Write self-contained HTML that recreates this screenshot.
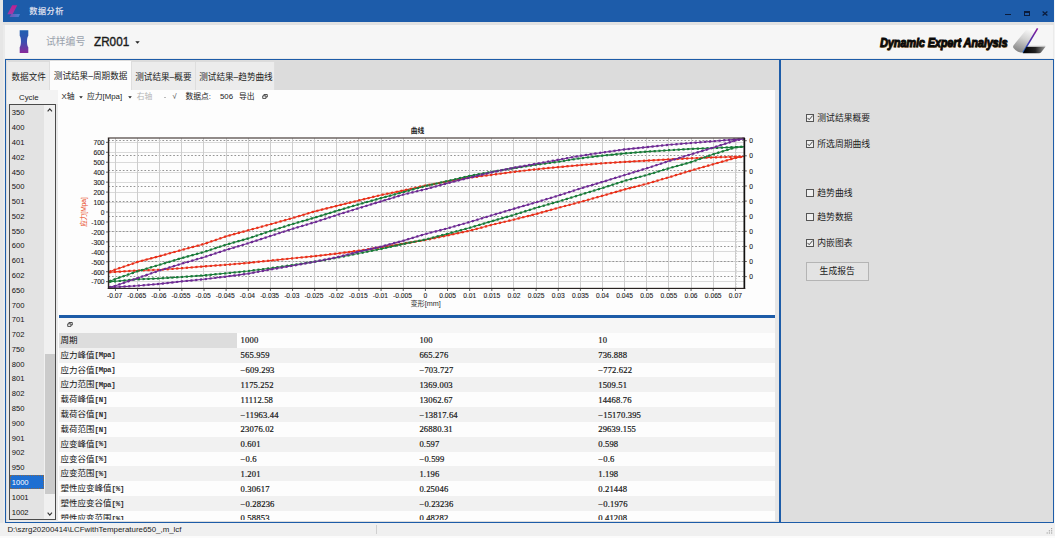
<!DOCTYPE html>
<html lang="zh"><head><meta charset="utf-8"><title>数据分析</title>
<style>
*{box-sizing:border-box;margin:0;padding:0}
html,body{width:1055px;height:538px;overflow:hidden}
body{position:relative;background:#ebebeb;font-family:"Liberation Sans","Noto Sans CJK SC",sans-serif;color:#222;font-size:9px}
.abs{position:absolute}
.t{position:absolute;white-space:nowrap;line-height:1}
#titlebar{left:3px;top:0;width:1051px;height:21.7px;background:#1d5caa}
#hdr{left:4.5px;top:24.8px;width:1048.5px;height:33.2px;background:#f6f6f6}
#lp{left:4.7px;top:59.1px;width:776px;height:464.1px;border:1.9px solid #1d5ca8;border-top-width:1.8px;border-bottom-width:1.7px;border-right-width:2px;background:#dcdcdc}
#rp{left:779px;top:59.1px;width:274.8px;height:464.0px;border:2px solid #1d5ca8;border-top-width:1.8px;border-right-width:1.6px;border-bottom-width:1.7px;background:#dedede}
#status{left:0;top:523.1px;width:1055px;height:12.7px;background:#f0f0f0}
#bottomline{left:0;top:535.7px;width:1055px;height:2.3px;background:#fbfbfb}
.tab{position:absolute;top:62.3px;height:27.4px;background:#ececec;border-right:1px solid #dedede}
.tab.sel{background:#fcfcfc;top:61px;height:29px}
.tabt{position:absolute;white-space:nowrap;line-height:1;font-size:8.6px;color:#222;top:72.8px}
.cb{position:absolute;left:805.7px;width:8.4px;height:8.2px;border:0.9px solid #555;background:#efefef}
.cbt{position:absolute;left:817.3px;white-space:nowrap;line-height:1;font-size:8.8px;color:#222}
.li{position:absolute;left:11.7px;white-space:nowrap;line-height:1;font-size:7.6px;font-family:"Liberation Sans",sans-serif;color:#111}
.row{position:absolute;left:58.6px;width:716.7px;height:14.8px}
.rk{position:absolute;left:60.5px;white-space:nowrap;line-height:1;font-size:8.5px;font-family:"Liberation Serif","Noto Sans CJK SC",serif;color:#111;font-weight:400}
.rv{position:absolute;white-space:nowrap;line-height:1;font-size:8.6px;font-family:"Liberation Serif","Noto Serif CJK SC",serif;color:#151515;-webkit-text-stroke:0.2px #151515;letter-spacing:0.15px}
</style></head>
<body>
<div class="abs" id="titlebar"></div>
<div class="abs" style="left:0;top:0;width:3px;height:538px;background:#e6e6e6"></div>
<div class="abs" style="left:1054px;top:0;width:1px;height:538px;background:#f4f4f4"></div>
<div class="abs" style="left:3px;top:21.7px;width:1051px;height:3.3px;background:#e2e2e2"></div>
<div class="abs" id="hdr"></div>
<div class="abs" id="lp"></div>
<div class="abs" id="rp"></div>
<div class="abs" id="status"></div>
<div class="abs" id="bottomline"></div>
<svg class="abs" style="left:6px;top:4px" width="14" height="14" viewBox="0 0 14 14">
<defs><linearGradient id="lg1" x1="0" y1="0" x2="0" y2="1"><stop offset="0" stop-color="#c0208f"/><stop offset="1" stop-color="#a03aa8"/></linearGradient>
<linearGradient id="lg2" x1="0" y1="0" x2="1" y2="0"><stop offset="0" stop-color="#7a4fb5"/><stop offset="1" stop-color="#3f86d6"/></linearGradient></defs>
<path d="M6.2 1.2 L11.2 1.2 L6.6 10.2 L1.4 10.2 Z" fill="url(#lg1)"/>
<path d="M5.4 10 L14 10 L12.6 13 L3.6 13 Z" fill="url(#lg2)"/>
</svg>
<div class="t" style="left:29.2px;top:8.2px;font-size:8.2px;letter-spacing:0.5px;color:#d0d7e9;font-weight:700">数据分析</div>
<div class="abs" style="left:1005.4px;top:13.9px;width:5.6px;height:1.6px;background:#0b1c3c"></div>
<div class="abs" style="left:1023.6px;top:10.8px;width:6.3px;height:5.4px;border:1.2px solid #0b1c3c;border-top-width:2.2px"></div>
<svg class="abs" style="left:1042px;top:11.2px" width="6" height="5" viewBox="0 0 6 5"><path d="M0.6 0.5 L5.4 4.5 M5.4 0.5 L0.6 4.5" stroke="#0b1c3c" stroke-width="1.3" fill="none"/></svg>
<svg class="abs" style="left:19px;top:30px" width="10" height="24" viewBox="0 0 10 24">
<defs><linearGradient id="sg" x1="0" y1="0" x2="0" y2="1"><stop offset="0" stop-color="#1f5fb0"/><stop offset="0.5" stop-color="#3a4fb0"/><stop offset="1" stop-color="#8a2a9a"/></linearGradient></defs>
<path d="M0.7 0.3 H9.3 V5.8 C7.6 7.5 7.6 15.5 9.3 17.2 V23 H0.7 V17.2 C2.4 15.5 2.4 7.5 0.7 5.8 Z" fill="url(#sg)"/></svg>
<div class="t" style="left:46px;top:36.6px;font-size:9.8px;color:#9aa2ad">试样编号</div>
<div class="t" style="left:94px;top:34.6px;font-size:13.4px;color:#1a1a1a;transform-origin:0 0;transform:scaleX(0.875);-webkit-text-stroke:0.4px #1a1a1a">ZR001</div>
<svg class="abs" style="left:135px;top:41px" width="5" height="3" viewBox="0 0 5 3"><path d="M0.3 0.2 H4.7 L2.5 2.8 Z" fill="#222"/></svg>
<div class="t" id="dea" style="left:879.6px;top:35.6px;font-size:13.6px;font-weight:700;font-style:italic;color:#0a0a0a;transform-origin:0 0;transform:scaleX(0.81);-webkit-text-stroke:0.95px #0a0a0a;text-shadow:0.8px 0.8px 0 #d9a868;letter-spacing:-0.2px">Dynamic Expert Analysis</div>
<svg class="abs" style="left:1011px;top:27px" width="38" height="29" viewBox="0 0 38 29">
<defs><linearGradient id="sv" x1="0.7" y1="0" x2="0.3" y2="1"><stop offset="0" stop-color="#fbfbfb"/><stop offset="0.45" stop-color="#d2d2d2"/><stop offset="1" stop-color="#858585"/></linearGradient>
<linearGradient id="pl" x1="0" y1="0" x2="0" y2="1"><stop offset="0" stop-color="#8a1a9a"/><stop offset="0.5" stop-color="#4a2aa8"/><stop offset="1" stop-color="#1f6fd0"/></linearGradient>
<linearGradient id="bk" x1="0" y1="0" x2="1" y2="0"><stop offset="0" stop-color="#000"/><stop offset="0.55" stop-color="#222"/><stop offset="1" stop-color="#9a9a9a"/></linearGradient></defs>
<path d="M14.5 3.5 Q16 1.8 18.5 1.8 L26.5 1.8 L12.5 25.5 L9.5 25.5 Q5 24.5 2.5 21 Q1.6 19.6 2.6 18.2 Z" fill="url(#sv)"/>
<path d="M26.6 1.4 L12 25.6" stroke="url(#pl)" stroke-width="1.6" fill="none"/>
<path d="M15.5 19.8 L34.5 19.8 L30 25.6 Q29.3 26.3 28 26.3 L11.8 26.3 Z" fill="url(#bk)"/>
<path d="M17.5 19.3 L34.3 19.3" stroke="#bdbdbd" stroke-width="1"/>
</svg>
<div class="abs" style="left:6.7px;top:60.9px;width:1.7px;height:29px;background:#e8e8e8"></div>
<div class="tab" style="left:8px;width:41.7px"></div>
<div class="tab sel" style="left:49.7px;width:82.6px"></div>
<div class="tab" style="left:132.3px;width:63.4px"></div>
<div class="tab" style="left:195.7px;width:79.5px"></div>
<div class="tabt" style="left:11.5px">数据文件</div>
<div class="tabt" style="left:53.8px;top:71.7px">测试结果–周期数据</div>
<div class="tabt" style="left:135.2px">测试结果–概要</div>
<div class="tabt" style="left:199.2px">测试结果–趋势曲线</div>
<div class="abs" style="left:6.6px;top:89.7px;width:768.7px;height:431.8px;background:#fdfdfd"></div>
<div class="abs" style="left:6.6px;top:104px;width:51.8px;height:417.5px;background:#e9e9e9"></div>
<div class="abs" style="left:775.3px;top:89.7px;width:3.5px;height:431.8px;background:#e6e6e6"></div>
<div class="abs" style="left:6.7px;top:89.7px;width:51.5px;height:14.3px;background:#f3f3f3"></div>
<div class="t" style="left:19px;top:93.5px;font-size:7.8px;color:#222">Cycle</div>
<div class="abs" style="left:9.2px;top:104px;width:47px;height:415.6px;border:1px solid #4a4a4a;background:#f0f0f0"></div>
<div class="abs" style="left:10.2px;top:105px;width:34px;height:413.6px;background:#e3e3e3"></div>
<div class="li" style="top:109.4px">350</div>
<div class="li" style="top:124.2px">400</div>
<div class="li" style="top:139.0px">401</div>
<div class="li" style="top:153.7px">402</div>
<div class="li" style="top:168.5px">450</div>
<div class="li" style="top:183.3px">500</div>
<div class="li" style="top:198.1px">501</div>
<div class="li" style="top:212.9px">502</div>
<div class="li" style="top:227.6px">550</div>
<div class="li" style="top:242.4px">600</div>
<div class="li" style="top:257.2px">601</div>
<div class="li" style="top:272.0px">602</div>
<div class="li" style="top:286.8px">650</div>
<div class="li" style="top:301.5px">700</div>
<div class="li" style="top:316.3px">701</div>
<div class="li" style="top:331.1px">702</div>
<div class="li" style="top:345.9px">750</div>
<div class="li" style="top:360.7px">800</div>
<div class="li" style="top:375.4px">801</div>
<div class="li" style="top:390.2px">802</div>
<div class="li" style="top:405.0px">850</div>
<div class="li" style="top:419.8px">900</div>
<div class="li" style="top:434.6px">901</div>
<div class="li" style="top:449.3px">902</div>
<div class="li" style="top:464.1px">950</div>
<div class="abs" style="left:10.2px;top:474.5px;width:34.3px;height:14.6px;background:#1e6fd2;border:1px dotted #8a6a4a"></div>
<div class="li" style="top:478.9px;color:#fff">1000</div>
<div class="li" style="top:493.7px">1001</div>
<div class="li" style="top:508.5px">1002</div>
<div class="abs" style="left:45px;top:354px;width:9.6px;height:139.7px;background:#cbcbcb"></div>
<svg class="abs" style="left:47px;top:107.6px" width="5.6" height="4" viewBox="0 0 7 5"><path d="M0.8 4.2 L3.5 1.2 L6.2 4.2" stroke="#333" stroke-width="1.4" fill="none"/></svg>
<svg class="abs" style="left:47.2px;top:512.4px" width="5.6" height="4" viewBox="0 0 7 5"><path d="M0.8 0.8 L3.5 3.8 L6.2 0.8" stroke="#333" stroke-width="1.4" fill="none"/></svg>
<div class="t" style="left:61.5px;top:93.3px;font-size:7.8px;color:#222">X轴</div>
<div class="t" style="left:87px;top:93.3px;font-size:7.8px;color:#222">应力[Mpa]</div>
<div class="t" style="left:136.8px;top:93.3px;font-size:7.8px;color:#b4b4b4">右轴</div>
<div class="t" style="left:185.4px;top:93.3px;font-size:7.8px;color:#222">数据点:</div>
<div class="t" style="left:220px;top:93.3px;font-size:7.8px;color:#222">506</div>
<div class="t" style="left:239px;top:93.3px;font-size:7.8px;color:#222">导出</div>
<svg class="abs" style="left:78.6px;top:96px" width="4" height="3" viewBox="0 0 4 3"><path d="M0.2 0.3 H3.8 L2 2.6 Z" fill="#222"/></svg>
<svg class="abs" style="left:127.6px;top:96px" width="4" height="3" viewBox="0 0 4 3"><path d="M0.2 0.3 H3.8 L2 2.6 Z" fill="#222"/></svg>
<div class="abs" style="left:164px;top:97px;width:2.4px;height:1px;background:#bbb"></div>
<div class="t" style="left:172.6px;top:92.6px;font-size:7.4px;color:#333">√</div>
<svg class="abs" style="left:261.5px;top:93.6px" width="6" height="5.1" viewBox="0 0 7 6"><path d="M2.2 0.6 H6.2 V3.6 H2.2 Z" fill="none" stroke="#333" stroke-width="1"/><path d="M0.8 2.2 H4.6 V5.2 H0.8 Z" fill="#fdfdfd" stroke="#333" stroke-width="1"/></svg>
<svg class="abs" style="left:0;top:0" width="1055" height="538" viewBox="0 0 1055 538" font-family="Liberation Sans, Noto Sans CJK SC, sans-serif">
<line x1="108.4" x2="744.4" y1="281.50" y2="281.50" stroke="#dadada" stroke-width="1"/>
<line x1="108.4" x2="744.4" y1="271.50" y2="271.50" stroke="#dadada" stroke-width="1"/>
<line x1="108.4" x2="744.4" y1="261.50" y2="261.50" stroke="#dadada" stroke-width="1"/>
<line x1="108.4" x2="744.4" y1="251.50" y2="251.50" stroke="#dadada" stroke-width="1"/>
<line x1="108.4" x2="744.4" y1="241.50" y2="241.50" stroke="#dadada" stroke-width="1"/>
<line x1="108.4" x2="744.4" y1="231.50" y2="231.50" stroke="#dadada" stroke-width="1"/>
<line x1="108.4" x2="744.4" y1="221.50" y2="221.50" stroke="#dadada" stroke-width="1"/>
<line x1="108.4" x2="744.4" y1="212.50" y2="212.50" stroke="#dadada" stroke-width="1"/>
<line x1="108.4" x2="744.4" y1="202.50" y2="202.50" stroke="#dadada" stroke-width="1"/>
<line x1="108.4" x2="744.4" y1="192.50" y2="192.50" stroke="#dadada" stroke-width="1"/>
<line x1="108.4" x2="744.4" y1="182.50" y2="182.50" stroke="#dadada" stroke-width="1"/>
<line x1="108.4" x2="744.4" y1="172.50" y2="172.50" stroke="#dadada" stroke-width="1"/>
<line x1="108.4" x2="744.4" y1="162.50" y2="162.50" stroke="#dadada" stroke-width="1"/>
<line x1="108.4" x2="744.4" y1="152.50" y2="152.50" stroke="#dadada" stroke-width="1"/>
<line x1="108.4" x2="744.4" y1="142.50" y2="142.50" stroke="#dadada" stroke-width="1"/>
<line x1="108.4" x2="744.4" y1="140.50" y2="140.50" stroke="#959595" stroke-width="1" stroke-dasharray="1.7 1.9"/>
<line x1="108.4" x2="744.4" y1="155.50" y2="155.50" stroke="#959595" stroke-width="1" stroke-dasharray="1.7 1.9"/>
<line x1="108.4" x2="744.4" y1="170.50" y2="170.50" stroke="#959595" stroke-width="1" stroke-dasharray="1.7 1.9"/>
<line x1="108.4" x2="744.4" y1="186.50" y2="186.50" stroke="#959595" stroke-width="1" stroke-dasharray="1.7 1.9"/>
<line x1="108.4" x2="744.4" y1="201.50" y2="201.50" stroke="#959595" stroke-width="1" stroke-dasharray="1.7 1.9"/>
<line x1="108.4" x2="744.4" y1="216.50" y2="216.50" stroke="#959595" stroke-width="1" stroke-dasharray="1.7 1.9"/>
<line x1="108.4" x2="744.4" y1="231.50" y2="231.50" stroke="#959595" stroke-width="1" stroke-dasharray="1.7 1.9"/>
<line x1="108.4" x2="744.4" y1="246.50" y2="246.50" stroke="#959595" stroke-width="1" stroke-dasharray="1.7 1.9"/>
<line x1="108.4" x2="744.4" y1="261.50" y2="261.50" stroke="#959595" stroke-width="1" stroke-dasharray="1.7 1.9"/>
<line x1="108.4" x2="744.4" y1="276.50" y2="276.50" stroke="#959595" stroke-width="1" stroke-dasharray="1.7 1.9"/>
<line x1="115.50" x2="115.50" y1="138.0" y2="288.4" stroke="#cdcdcd" stroke-width="1"/>
<line x1="137.50" x2="137.50" y1="138.0" y2="288.4" stroke="#cdcdcd" stroke-width="1"/>
<line x1="159.50" x2="159.50" y1="138.0" y2="288.4" stroke="#cdcdcd" stroke-width="1"/>
<line x1="181.50" x2="181.50" y1="138.0" y2="288.4" stroke="#cdcdcd" stroke-width="1"/>
<line x1="203.50" x2="203.50" y1="138.0" y2="288.4" stroke="#cdcdcd" stroke-width="1"/>
<line x1="226.50" x2="226.50" y1="138.0" y2="288.4" stroke="#cdcdcd" stroke-width="1"/>
<line x1="248.50" x2="248.50" y1="138.0" y2="288.4" stroke="#cdcdcd" stroke-width="1"/>
<line x1="270.50" x2="270.50" y1="138.0" y2="288.4" stroke="#cdcdcd" stroke-width="1"/>
<line x1="292.50" x2="292.50" y1="138.0" y2="288.4" stroke="#cdcdcd" stroke-width="1"/>
<line x1="314.50" x2="314.50" y1="138.0" y2="288.4" stroke="#cdcdcd" stroke-width="1"/>
<line x1="336.50" x2="336.50" y1="138.0" y2="288.4" stroke="#cdcdcd" stroke-width="1"/>
<line x1="358.50" x2="358.50" y1="138.0" y2="288.4" stroke="#cdcdcd" stroke-width="1"/>
<line x1="381.50" x2="381.50" y1="138.0" y2="288.4" stroke="#cdcdcd" stroke-width="1"/>
<line x1="403.50" x2="403.50" y1="138.0" y2="288.4" stroke="#cdcdcd" stroke-width="1"/>
<line x1="425.50" x2="425.50" y1="138.0" y2="288.4" stroke="#cdcdcd" stroke-width="1"/>
<line x1="447.50" x2="447.50" y1="138.0" y2="288.4" stroke="#cdcdcd" stroke-width="1"/>
<line x1="469.50" x2="469.50" y1="138.0" y2="288.4" stroke="#cdcdcd" stroke-width="1"/>
<line x1="491.50" x2="491.50" y1="138.0" y2="288.4" stroke="#cdcdcd" stroke-width="1"/>
<line x1="513.50" x2="513.50" y1="138.0" y2="288.4" stroke="#cdcdcd" stroke-width="1"/>
<line x1="536.50" x2="536.50" y1="138.0" y2="288.4" stroke="#cdcdcd" stroke-width="1"/>
<line x1="558.50" x2="558.50" y1="138.0" y2="288.4" stroke="#cdcdcd" stroke-width="1"/>
<line x1="580.50" x2="580.50" y1="138.0" y2="288.4" stroke="#cdcdcd" stroke-width="1"/>
<line x1="602.50" x2="602.50" y1="138.0" y2="288.4" stroke="#cdcdcd" stroke-width="1"/>
<line x1="624.50" x2="624.50" y1="138.0" y2="288.4" stroke="#cdcdcd" stroke-width="1"/>
<line x1="646.50" x2="646.50" y1="138.0" y2="288.4" stroke="#cdcdcd" stroke-width="1"/>
<line x1="668.50" x2="668.50" y1="138.0" y2="288.4" stroke="#cdcdcd" stroke-width="1"/>
<line x1="691.50" x2="691.50" y1="138.0" y2="288.4" stroke="#cdcdcd" stroke-width="1"/>
<line x1="713.50" x2="713.50" y1="138.0" y2="288.4" stroke="#cdcdcd" stroke-width="1"/>
<line x1="735.50" x2="735.50" y1="138.0" y2="288.4" stroke="#cdcdcd" stroke-width="1"/>
<line x1="736.4" x2="736.4" y1="138.0" y2="288.4" stroke="#bdbdbd" stroke-width="0.8" stroke-dasharray="1.1 1.7"/>
<path d="M109.1 271.7 L115.5 269.5 L137.6 261.9 L159.6 256.1 L181.6 250.0 L203.9 244.0 L225.9 236.4 L248.3 230.3 L270.4 224.3 L292.7 218.0 L314.7 211.4 L336.7 205.9 L359.1 200.4 L381.0 195.0 L403.6 190.4 L425.4 185.5 L447.7 181.5 L469.7 177.6 L492.0 174.8 L514.3 171.8 L536.4 169.2 L558.6 167.1 L580.3 165.1 L602.5 163.3 L624.8 161.9 L646.9 160.6 L669.1 159.4 L691.1 158.3 L713.2 157.4 L735.5 156.7 L743.8 156.5" fill="none" stroke="#e8301a" stroke-width="1.1" stroke-linejoin="round"/>
<path d="M109.1 271.7 L115.5 269.5 L137.6 261.9 L159.6 256.1 L181.6 250.0 L203.9 244.0 L225.9 236.4 L248.3 230.3 L270.4 224.3 L292.7 218.0 L314.7 211.4 L336.7 205.9 L359.1 200.4 L381.0 195.0 L403.6 190.4 L425.4 185.5 L447.7 181.5 L469.7 177.6 L492.0 174.8 L514.3 171.8 L536.4 169.2 L558.6 167.1 L580.3 165.1 L602.5 163.3 L624.8 161.9 L646.9 160.6 L669.1 159.4 L691.1 158.3 L713.2 157.4 L735.5 156.7 L743.8 156.5" fill="none" stroke="#e8301a" stroke-width="2.2" stroke-dasharray="2.2 2.6" stroke-linejoin="round"/>
<path d="M109.1 272.3 L115.5 271.9 L137.6 270.5 L159.6 269.8 L181.6 268.2 L203.9 266.4 L225.9 264.8 L248.3 262.9 L270.4 260.6 L292.7 258.3 L314.7 256.1 L336.7 253.6 L359.1 250.6 L381.0 247.3 L403.6 243.6 L425.4 240.0 L447.7 235.4 L469.7 230.7 L492.0 224.8 L514.3 219.5 L536.4 213.9 L558.6 207.7 L580.3 202.0 L602.5 195.7 L624.8 189.4 L646.9 183.7 L669.1 177.2 L691.1 170.5 L713.2 164.2 L735.5 157.9 L743.8 156.5" fill="none" stroke="#e8301a" stroke-width="1.1" stroke-linejoin="round"/>
<path d="M109.1 272.3 L115.5 271.9 L137.6 270.5 L159.6 269.8 L181.6 268.2 L203.9 266.4 L225.9 264.8 L248.3 262.9 L270.4 260.6 L292.7 258.3 L314.7 256.1 L336.7 253.6 L359.1 250.6 L381.0 247.3 L403.6 243.6 L425.4 240.0 L447.7 235.4 L469.7 230.7 L492.0 224.8 L514.3 219.5 L536.4 213.9 L558.6 207.7 L580.3 202.0 L602.5 195.7 L624.8 189.4 L646.9 183.7 L669.1 177.2 L691.1 170.5 L713.2 164.2 L735.5 157.9 L743.8 156.5" fill="none" stroke="#e8301a" stroke-width="2.2" stroke-dasharray="2.2 2.6" stroke-linejoin="round"/>
<path d="M109.1 281.4 L115.5 278.9 L137.6 271.3 L159.6 264.8 L181.6 258.1 L203.9 252.0 L225.9 244.7 L248.3 238.4 L270.4 231.0 L292.7 224.0 L314.7 217.6 L336.7 210.9 L359.1 204.2 L381.0 198.1 L403.6 192.0 L425.4 186.0 L447.7 181.0 L469.7 175.9 L492.0 171.8 L514.3 168.1 L536.4 164.7 L558.6 161.7 L580.3 158.3 L602.5 155.6 L624.8 153.4 L646.9 151.6 L669.1 150.2 L691.1 148.9 L713.2 148.0 L735.5 147.1 L743.8 146.7" fill="none" stroke="#187a38" stroke-width="1.1" stroke-linejoin="round"/>
<path d="M109.1 281.4 L115.5 278.9 L137.6 271.3 L159.6 264.8 L181.6 258.1 L203.9 252.0 L225.9 244.7 L248.3 238.4 L270.4 231.0 L292.7 224.0 L314.7 217.6 L336.7 210.9 L359.1 204.2 L381.0 198.1 L403.6 192.0 L425.4 186.0 L447.7 181.0 L469.7 175.9 L492.0 171.8 L514.3 168.1 L536.4 164.7 L558.6 161.7 L580.3 158.3 L602.5 155.6 L624.8 153.4 L646.9 151.6 L669.1 150.2 L691.1 148.9 L713.2 148.0 L735.5 147.1 L743.8 146.7" fill="none" stroke="#187a38" stroke-width="2.2" stroke-dasharray="2.2 2.6" stroke-linejoin="round"/>
<path d="M109.1 281.9 L115.5 281.3 L137.6 279.3 L159.6 278.4 L181.6 277.0 L203.9 275.4 L225.9 273.3 L248.3 271.0 L270.4 268.2 L292.7 265.0 L314.7 261.7 L336.7 257.8 L359.1 253.3 L381.0 248.9 L403.6 243.9 L425.4 239.5 L447.7 233.7 L469.7 227.8 L492.0 221.1 L514.3 214.8 L536.4 207.7 L558.6 201.5 L580.3 194.8 L602.5 188.0 L624.8 180.8 L646.9 175.0 L669.1 168.2 L691.1 162.1 L713.2 154.3 L735.5 147.4 L743.8 146.7" fill="none" stroke="#187a38" stroke-width="1.1" stroke-linejoin="round"/>
<path d="M109.1 281.9 L115.5 281.3 L137.6 279.3 L159.6 278.4 L181.6 277.0 L203.9 275.4 L225.9 273.3 L248.3 271.0 L270.4 268.2 L292.7 265.0 L314.7 261.7 L336.7 257.8 L359.1 253.3 L381.0 248.9 L403.6 243.9 L425.4 239.5 L447.7 233.7 L469.7 227.8 L492.0 221.1 L514.3 214.8 L536.4 207.7 L558.6 201.5 L580.3 194.8 L602.5 188.0 L624.8 180.8 L646.9 175.0 L669.1 168.2 L691.1 162.1 L713.2 154.3 L735.5 147.4 L743.8 146.7" fill="none" stroke="#187a38" stroke-width="2.2" stroke-dasharray="2.2 2.6" stroke-linejoin="round"/>
<path d="M109.1 287.2 L115.5 285.7 L137.6 278.1 L159.6 270.5 L181.6 263.7 L203.9 257.2 L225.9 250.0 L248.3 243.2 L270.4 236.0 L292.7 228.8 L314.7 222.2 L336.7 215.1 L359.1 208.1 L381.0 201.4 L403.6 194.5 L425.4 189.3 L447.7 183.1 L469.7 177.6 L492.0 172.3 L514.3 167.6 L536.4 163.7 L558.6 159.7 L580.3 155.8 L602.5 152.5 L624.8 149.4 L646.9 147.1 L669.1 144.8 L691.1 143.0 L713.2 141.2 L735.5 139.4 L743.8 138.6" fill="none" stroke="#6d2a93" stroke-width="1.1" stroke-linejoin="round"/>
<path d="M109.1 287.2 L115.5 285.7 L137.6 278.1 L159.6 270.5 L181.6 263.7 L203.9 257.2 L225.9 250.0 L248.3 243.2 L270.4 236.0 L292.7 228.8 L314.7 222.2 L336.7 215.1 L359.1 208.1 L381.0 201.4 L403.6 194.5 L425.4 189.3 L447.7 183.1 L469.7 177.6 L492.0 172.3 L514.3 167.6 L536.4 163.7 L558.6 159.7 L580.3 155.8 L602.5 152.5 L624.8 149.4 L646.9 147.1 L669.1 144.8 L691.1 143.0 L713.2 141.2 L735.5 139.4 L743.8 138.6" fill="none" stroke="#6d2a93" stroke-width="2.2" stroke-dasharray="2.2 2.6" stroke-linejoin="round"/>
<path d="M109.1 287.5 L115.5 287.1 L137.6 285.7 L159.6 283.9 L181.6 281.4 L203.9 279.2 L225.9 276.6 L248.3 273.6 L270.4 269.5 L292.7 265.7 L314.7 261.7 L336.7 257.3 L359.1 251.6 L381.0 246.6 L403.6 240.6 L425.4 234.0 L447.7 228.3 L469.7 222.0 L492.0 215.3 L514.3 208.6 L536.4 202.2 L558.6 195.5 L580.3 188.5 L602.5 181.9 L624.8 175.0 L646.9 168.2 L669.1 161.0 L691.1 154.3 L713.2 147.6 L735.5 140.4 L743.8 138.6" fill="none" stroke="#6d2a93" stroke-width="1.1" stroke-linejoin="round"/>
<path d="M109.1 287.5 L115.5 287.1 L137.6 285.7 L159.6 283.9 L181.6 281.4 L203.9 279.2 L225.9 276.6 L248.3 273.6 L270.4 269.5 L292.7 265.7 L314.7 261.7 L336.7 257.3 L359.1 251.6 L381.0 246.6 L403.6 240.6 L425.4 234.0 L447.7 228.3 L469.7 222.0 L492.0 215.3 L514.3 208.6 L536.4 202.2 L558.6 195.5 L580.3 188.5 L602.5 181.9 L624.8 175.0 L646.9 168.2 L669.1 161.0 L691.1 154.3 L713.2 147.6 L735.5 140.4 L743.8 138.6" fill="none" stroke="#6d2a93" stroke-width="2.2" stroke-dasharray="2.2 2.6" stroke-linejoin="round"/>
<rect x="108.4" y="138.0" width="636.0" height="150.4" fill="none" stroke="#4a403c" stroke-width="1.2"/>
<line x1="744.4" x2="744.4" y1="138.0" y2="289.0" stroke="#111" stroke-width="1.6"/>
<line x1="107.8" x2="745.2" y1="288.5" y2="288.5" stroke="#2a2422" stroke-width="1.15"/>
<line x1="108.7" x2="108.7" y1="138.0" y2="289.0" stroke="#2a2422" stroke-width="1.2"/>
<line x1="106.0" x2="108.4" y1="281.65" y2="281.65" stroke="#333" stroke-width="0.8"/>
<text x="104.6" y="284.45" font-size="6.7" font-weight="400" fill="#1c1c1c" stroke="#1c1c1c" stroke-width="0.1" text-anchor="end">-700</text>
<line x1="106.0" x2="108.4" y1="271.70" y2="271.70" stroke="#333" stroke-width="0.8"/>
<text x="104.6" y="274.50" font-size="6.7" font-weight="400" fill="#1c1c1c" stroke="#1c1c1c" stroke-width="0.1" text-anchor="end">-600</text>
<line x1="106.0" x2="108.4" y1="261.75" y2="261.75" stroke="#333" stroke-width="0.8"/>
<text x="104.6" y="264.55" font-size="6.7" font-weight="400" fill="#1c1c1c" stroke="#1c1c1c" stroke-width="0.1" text-anchor="end">-500</text>
<line x1="106.0" x2="108.4" y1="251.80" y2="251.80" stroke="#333" stroke-width="0.8"/>
<text x="104.6" y="254.60" font-size="6.7" font-weight="400" fill="#1c1c1c" stroke="#1c1c1c" stroke-width="0.1" text-anchor="end">-400</text>
<line x1="106.0" x2="108.4" y1="241.85" y2="241.85" stroke="#333" stroke-width="0.8"/>
<text x="104.6" y="244.65" font-size="6.7" font-weight="400" fill="#1c1c1c" stroke="#1c1c1c" stroke-width="0.1" text-anchor="end">-300</text>
<line x1="106.0" x2="108.4" y1="231.90" y2="231.90" stroke="#333" stroke-width="0.8"/>
<text x="104.6" y="234.70" font-size="6.7" font-weight="400" fill="#1c1c1c" stroke="#1c1c1c" stroke-width="0.1" text-anchor="end">-200</text>
<line x1="106.0" x2="108.4" y1="221.95" y2="221.95" stroke="#333" stroke-width="0.8"/>
<text x="104.6" y="224.75" font-size="6.7" font-weight="400" fill="#1c1c1c" stroke="#1c1c1c" stroke-width="0.1" text-anchor="end">-100</text>
<line x1="106.0" x2="108.4" y1="212.00" y2="212.00" stroke="#333" stroke-width="0.8"/>
<text x="104.6" y="214.80" font-size="6.7" font-weight="400" fill="#1c1c1c" stroke="#1c1c1c" stroke-width="0.1" text-anchor="end">0</text>
<line x1="106.0" x2="108.4" y1="202.05" y2="202.05" stroke="#333" stroke-width="0.8"/>
<text x="104.6" y="204.85" font-size="6.7" font-weight="400" fill="#1c1c1c" stroke="#1c1c1c" stroke-width="0.1" text-anchor="end">100</text>
<line x1="106.0" x2="108.4" y1="192.10" y2="192.10" stroke="#333" stroke-width="0.8"/>
<text x="104.6" y="194.90" font-size="6.7" font-weight="400" fill="#1c1c1c" stroke="#1c1c1c" stroke-width="0.1" text-anchor="end">200</text>
<line x1="106.0" x2="108.4" y1="182.15" y2="182.15" stroke="#333" stroke-width="0.8"/>
<text x="104.6" y="184.95" font-size="6.7" font-weight="400" fill="#1c1c1c" stroke="#1c1c1c" stroke-width="0.1" text-anchor="end">300</text>
<line x1="106.0" x2="108.4" y1="172.20" y2="172.20" stroke="#333" stroke-width="0.8"/>
<text x="104.6" y="175.00" font-size="6.7" font-weight="400" fill="#1c1c1c" stroke="#1c1c1c" stroke-width="0.1" text-anchor="end">400</text>
<line x1="106.0" x2="108.4" y1="162.25" y2="162.25" stroke="#333" stroke-width="0.8"/>
<text x="104.6" y="165.05" font-size="6.7" font-weight="400" fill="#1c1c1c" stroke="#1c1c1c" stroke-width="0.1" text-anchor="end">500</text>
<line x1="106.0" x2="108.4" y1="152.30" y2="152.30" stroke="#333" stroke-width="0.8"/>
<text x="104.6" y="155.10" font-size="6.7" font-weight="400" fill="#1c1c1c" stroke="#1c1c1c" stroke-width="0.1" text-anchor="end">600</text>
<line x1="106.0" x2="108.4" y1="142.35" y2="142.35" stroke="#333" stroke-width="0.8"/>
<text x="104.6" y="145.15" font-size="6.7" font-weight="400" fill="#1c1c1c" stroke="#1c1c1c" stroke-width="0.1" text-anchor="end">700</text>
<line x1="744.4" x2="746.8" y1="140.70" y2="140.70" stroke="#333" stroke-width="0.8"/>
<text x="749.2" y="143.30" font-size="6.7" font-weight="400" fill="#1c1c1c" stroke="#1c1c1c" stroke-width="0.1">0</text>
<line x1="744.4" x2="746.8" y1="155.80" y2="155.80" stroke="#333" stroke-width="0.8"/>
<text x="749.2" y="158.40" font-size="6.7" font-weight="400" fill="#1c1c1c" stroke="#1c1c1c" stroke-width="0.1">0</text>
<line x1="744.4" x2="746.8" y1="170.90" y2="170.90" stroke="#333" stroke-width="0.8"/>
<text x="749.2" y="173.50" font-size="6.7" font-weight="400" fill="#1c1c1c" stroke="#1c1c1c" stroke-width="0.1">0</text>
<line x1="744.4" x2="746.8" y1="186.00" y2="186.00" stroke="#333" stroke-width="0.8"/>
<text x="749.2" y="188.60" font-size="6.7" font-weight="400" fill="#1c1c1c" stroke="#1c1c1c" stroke-width="0.1">0</text>
<line x1="744.4" x2="746.8" y1="201.10" y2="201.10" stroke="#333" stroke-width="0.8"/>
<text x="749.2" y="203.70" font-size="6.7" font-weight="400" fill="#1c1c1c" stroke="#1c1c1c" stroke-width="0.1">0</text>
<line x1="744.4" x2="746.8" y1="216.20" y2="216.20" stroke="#333" stroke-width="0.8"/>
<text x="749.2" y="218.80" font-size="6.7" font-weight="400" fill="#1c1c1c" stroke="#1c1c1c" stroke-width="0.1">0</text>
<line x1="744.4" x2="746.8" y1="231.30" y2="231.30" stroke="#333" stroke-width="0.8"/>
<text x="749.2" y="233.90" font-size="6.7" font-weight="400" fill="#1c1c1c" stroke="#1c1c1c" stroke-width="0.1">0</text>
<line x1="744.4" x2="746.8" y1="246.40" y2="246.40" stroke="#333" stroke-width="0.8"/>
<text x="749.2" y="249.00" font-size="6.7" font-weight="400" fill="#1c1c1c" stroke="#1c1c1c" stroke-width="0.1">0</text>
<line x1="744.4" x2="746.8" y1="261.50" y2="261.50" stroke="#333" stroke-width="0.8"/>
<text x="749.2" y="264.10" font-size="6.7" font-weight="400" fill="#1c1c1c" stroke="#1c1c1c" stroke-width="0.1">0</text>
<line x1="744.4" x2="746.8" y1="276.60" y2="276.60" stroke="#333" stroke-width="0.8"/>
<text x="749.2" y="279.20" font-size="6.7" font-weight="400" fill="#1c1c1c" stroke="#1c1c1c" stroke-width="0.1">0</text>
<line x1="115.44" x2="115.44" y1="288.4" y2="291.0" stroke="#333" stroke-width="0.8"/>
<text x="114.64" y="298.0" font-size="6.7" font-weight="400" fill="#1c1c1c" stroke="#1c1c1c" stroke-width="0.1" text-anchor="middle">-0.07</text>
<line x1="137.58" x2="137.58" y1="288.4" y2="291.0" stroke="#333" stroke-width="0.8"/>
<text x="136.78" y="298.0" font-size="6.7" font-weight="400" fill="#1c1c1c" stroke="#1c1c1c" stroke-width="0.1" text-anchor="middle">-0.065</text>
<line x1="159.72" x2="159.72" y1="288.4" y2="291.0" stroke="#333" stroke-width="0.8"/>
<text x="158.92" y="298.0" font-size="6.7" font-weight="400" fill="#1c1c1c" stroke="#1c1c1c" stroke-width="0.1" text-anchor="middle">-0.06</text>
<line x1="181.86" x2="181.86" y1="288.4" y2="291.0" stroke="#333" stroke-width="0.8"/>
<text x="181.06" y="298.0" font-size="6.7" font-weight="400" fill="#1c1c1c" stroke="#1c1c1c" stroke-width="0.1" text-anchor="middle">-0.055</text>
<line x1="204.00" x2="204.00" y1="288.4" y2="291.0" stroke="#333" stroke-width="0.8"/>
<text x="203.20" y="298.0" font-size="6.7" font-weight="400" fill="#1c1c1c" stroke="#1c1c1c" stroke-width="0.1" text-anchor="middle">-0.05</text>
<line x1="226.14" x2="226.14" y1="288.4" y2="291.0" stroke="#333" stroke-width="0.8"/>
<text x="225.34" y="298.0" font-size="6.7" font-weight="400" fill="#1c1c1c" stroke="#1c1c1c" stroke-width="0.1" text-anchor="middle">-0.045</text>
<line x1="248.28" x2="248.28" y1="288.4" y2="291.0" stroke="#333" stroke-width="0.8"/>
<text x="247.48" y="298.0" font-size="6.7" font-weight="400" fill="#1c1c1c" stroke="#1c1c1c" stroke-width="0.1" text-anchor="middle">-0.04</text>
<line x1="270.42" x2="270.42" y1="288.4" y2="291.0" stroke="#333" stroke-width="0.8"/>
<text x="269.62" y="298.0" font-size="6.7" font-weight="400" fill="#1c1c1c" stroke="#1c1c1c" stroke-width="0.1" text-anchor="middle">-0.035</text>
<line x1="292.56" x2="292.56" y1="288.4" y2="291.0" stroke="#333" stroke-width="0.8"/>
<text x="291.76" y="298.0" font-size="6.7" font-weight="400" fill="#1c1c1c" stroke="#1c1c1c" stroke-width="0.1" text-anchor="middle">-0.03</text>
<line x1="314.70" x2="314.70" y1="288.4" y2="291.0" stroke="#333" stroke-width="0.8"/>
<text x="313.90" y="298.0" font-size="6.7" font-weight="400" fill="#1c1c1c" stroke="#1c1c1c" stroke-width="0.1" text-anchor="middle">-0.025</text>
<line x1="336.84" x2="336.84" y1="288.4" y2="291.0" stroke="#333" stroke-width="0.8"/>
<text x="336.04" y="298.0" font-size="6.7" font-weight="400" fill="#1c1c1c" stroke="#1c1c1c" stroke-width="0.1" text-anchor="middle">-0.02</text>
<line x1="358.98" x2="358.98" y1="288.4" y2="291.0" stroke="#333" stroke-width="0.8"/>
<text x="358.18" y="298.0" font-size="6.7" font-weight="400" fill="#1c1c1c" stroke="#1c1c1c" stroke-width="0.1" text-anchor="middle">-0.015</text>
<line x1="381.12" x2="381.12" y1="288.4" y2="291.0" stroke="#333" stroke-width="0.8"/>
<text x="380.32" y="298.0" font-size="6.7" font-weight="400" fill="#1c1c1c" stroke="#1c1c1c" stroke-width="0.1" text-anchor="middle">-0.01</text>
<line x1="403.26" x2="403.26" y1="288.4" y2="291.0" stroke="#333" stroke-width="0.8"/>
<text x="402.46" y="298.0" font-size="6.7" font-weight="400" fill="#1c1c1c" stroke="#1c1c1c" stroke-width="0.1" text-anchor="middle">-0.005</text>
<line x1="425.40" x2="425.40" y1="288.4" y2="291.0" stroke="#333" stroke-width="0.8"/>
<text x="425.40" y="298.0" font-size="6.7" font-weight="400" fill="#1c1c1c" stroke="#1c1c1c" stroke-width="0.1" text-anchor="middle">0</text>
<line x1="447.54" x2="447.54" y1="288.4" y2="291.0" stroke="#333" stroke-width="0.8"/>
<text x="447.54" y="298.0" font-size="6.7" font-weight="400" fill="#1c1c1c" stroke="#1c1c1c" stroke-width="0.1" text-anchor="middle">0.005</text>
<line x1="469.68" x2="469.68" y1="288.4" y2="291.0" stroke="#333" stroke-width="0.8"/>
<text x="469.68" y="298.0" font-size="6.7" font-weight="400" fill="#1c1c1c" stroke="#1c1c1c" stroke-width="0.1" text-anchor="middle">0.01</text>
<line x1="491.82" x2="491.82" y1="288.4" y2="291.0" stroke="#333" stroke-width="0.8"/>
<text x="491.82" y="298.0" font-size="6.7" font-weight="400" fill="#1c1c1c" stroke="#1c1c1c" stroke-width="0.1" text-anchor="middle">0.015</text>
<line x1="513.96" x2="513.96" y1="288.4" y2="291.0" stroke="#333" stroke-width="0.8"/>
<text x="513.96" y="298.0" font-size="6.7" font-weight="400" fill="#1c1c1c" stroke="#1c1c1c" stroke-width="0.1" text-anchor="middle">0.02</text>
<line x1="536.10" x2="536.10" y1="288.4" y2="291.0" stroke="#333" stroke-width="0.8"/>
<text x="536.10" y="298.0" font-size="6.7" font-weight="400" fill="#1c1c1c" stroke="#1c1c1c" stroke-width="0.1" text-anchor="middle">0.025</text>
<line x1="558.24" x2="558.24" y1="288.4" y2="291.0" stroke="#333" stroke-width="0.8"/>
<text x="558.24" y="298.0" font-size="6.7" font-weight="400" fill="#1c1c1c" stroke="#1c1c1c" stroke-width="0.1" text-anchor="middle">0.03</text>
<line x1="580.38" x2="580.38" y1="288.4" y2="291.0" stroke="#333" stroke-width="0.8"/>
<text x="580.38" y="298.0" font-size="6.7" font-weight="400" fill="#1c1c1c" stroke="#1c1c1c" stroke-width="0.1" text-anchor="middle">0.035</text>
<line x1="602.52" x2="602.52" y1="288.4" y2="291.0" stroke="#333" stroke-width="0.8"/>
<text x="602.52" y="298.0" font-size="6.7" font-weight="400" fill="#1c1c1c" stroke="#1c1c1c" stroke-width="0.1" text-anchor="middle">0.04</text>
<line x1="624.66" x2="624.66" y1="288.4" y2="291.0" stroke="#333" stroke-width="0.8"/>
<text x="624.66" y="298.0" font-size="6.7" font-weight="400" fill="#1c1c1c" stroke="#1c1c1c" stroke-width="0.1" text-anchor="middle">0.045</text>
<line x1="646.80" x2="646.80" y1="288.4" y2="291.0" stroke="#333" stroke-width="0.8"/>
<text x="646.80" y="298.0" font-size="6.7" font-weight="400" fill="#1c1c1c" stroke="#1c1c1c" stroke-width="0.1" text-anchor="middle">0.05</text>
<line x1="668.94" x2="668.94" y1="288.4" y2="291.0" stroke="#333" stroke-width="0.8"/>
<text x="668.94" y="298.0" font-size="6.7" font-weight="400" fill="#1c1c1c" stroke="#1c1c1c" stroke-width="0.1" text-anchor="middle">0.055</text>
<line x1="691.08" x2="691.08" y1="288.4" y2="291.0" stroke="#333" stroke-width="0.8"/>
<text x="691.08" y="298.0" font-size="6.7" font-weight="400" fill="#1c1c1c" stroke="#1c1c1c" stroke-width="0.1" text-anchor="middle">0.06</text>
<line x1="713.22" x2="713.22" y1="288.4" y2="291.0" stroke="#333" stroke-width="0.8"/>
<text x="713.22" y="298.0" font-size="6.7" font-weight="400" fill="#1c1c1c" stroke="#1c1c1c" stroke-width="0.1" text-anchor="middle">0.065</text>
<line x1="735.36" x2="735.36" y1="288.4" y2="291.0" stroke="#333" stroke-width="0.8"/>
<text x="735.36" y="298.0" font-size="6.7" font-weight="400" fill="#1c1c1c" stroke="#1c1c1c" stroke-width="0.1" text-anchor="middle">0.07</text>
<text x="417.5" y="132.6" font-size="6.8" font-weight="700" fill="#222" text-anchor="middle">曲线</text>
<text x="425.6" y="305.8" font-size="7.2" fill="#2a2a2a" text-anchor="middle">变形[mm]</text>
<text transform="translate(85.8 212) rotate(-90)" font-size="6.6" fill="#e8481c" text-anchor="middle">应力[Mpa]</text>
</svg>
<div class="abs" style="left:58.6px;top:315.4px;width:716.7px;height:2.2px;background:#1d5ca8"></div>
<div class="abs" style="left:58.6px;top:317.6px;width:716.7px;height:15.4px;background:#f6f6f6"></div>
<svg class="abs" style="left:66.6px;top:322px" width="6" height="5.1" viewBox="0 0 7 6"><path d="M2.2 0.6 H6.2 V3.6 H2.2 Z" fill="none" stroke="#333" stroke-width="1"/><path d="M0.8 2.2 H4.6 V5.2 H0.8 Z" fill="#fdfdfd" stroke="#333" stroke-width="1"/></svg>
<div class="abs" style="left:58.6px;top:333px;width:716.7px;height:186.6px;overflow:hidden">
<div class="abs" style="left:0;top:0;width:178.8px;height:14.83px;background:#dddddd"></div>
<div class="rk" style="left:2px;top:3.00px">周期<span style="font-size:7.4px;font-family:'Liberation Mono',monospace;font-weight:700;letter-spacing:-0.3px;position:relative;top:-0.4px;color:#2c2c2c"></span></div>
<div class="rv" style="left:182px;top:3.40px">1000</div>
<div class="rv" style="left:360.8px;top:3.40px">100</div>
<div class="rv" style="left:539.6px;top:3.40px">10</div>
<div class="abs" style="left:0;top:14.83px;width:716.7px;height:14.83px;background:#f1f1f1"></div>
<div class="rk" style="left:2px;top:17.83px">应力峰值<span style="font-size:7.4px;font-family:'Liberation Mono',monospace;font-weight:700;letter-spacing:-0.3px;position:relative;top:-0.4px;color:#2c2c2c">[Mpa]</span></div>
<div class="rv" style="left:182px;top:18.23px">565.959</div>
<div class="rv" style="left:360.8px;top:18.23px">665.276</div>
<div class="rv" style="left:539.6px;top:18.23px">736.888</div>
<div class="rk" style="left:2px;top:32.66px">应力谷值<span style="font-size:7.4px;font-family:'Liberation Mono',monospace;font-weight:700;letter-spacing:-0.3px;position:relative;top:-0.4px;color:#2c2c2c">[Mpa]</span></div>
<div class="rv" style="left:182px;top:33.06px">−609.293</div>
<div class="rv" style="left:360.8px;top:33.06px">−703.727</div>
<div class="rv" style="left:539.6px;top:33.06px">−772.622</div>
<div class="abs" style="left:0;top:44.49px;width:716.7px;height:14.83px;background:#f1f1f1"></div>
<div class="rk" style="left:2px;top:47.49px">应力范围<span style="font-size:7.4px;font-family:'Liberation Mono',monospace;font-weight:700;letter-spacing:-0.3px;position:relative;top:-0.4px;color:#2c2c2c">[Mpa]</span></div>
<div class="rv" style="left:182px;top:47.89px">1175.252</div>
<div class="rv" style="left:360.8px;top:47.89px">1369.003</div>
<div class="rv" style="left:539.6px;top:47.89px">1509.51</div>
<div class="rk" style="left:2px;top:62.32px">载荷峰值<span style="font-size:7.4px;font-family:'Liberation Mono',monospace;font-weight:700;letter-spacing:-0.3px;position:relative;top:-0.4px;color:#2c2c2c">[N]</span></div>
<div class="rv" style="left:182px;top:62.72px">11112.58</div>
<div class="rv" style="left:360.8px;top:62.72px">13062.67</div>
<div class="rv" style="left:539.6px;top:62.72px">14468.76</div>
<div class="abs" style="left:0;top:74.15px;width:716.7px;height:14.83px;background:#f1f1f1"></div>
<div class="rk" style="left:2px;top:77.15px">载荷谷值<span style="font-size:7.4px;font-family:'Liberation Mono',monospace;font-weight:700;letter-spacing:-0.3px;position:relative;top:-0.4px;color:#2c2c2c">[N]</span></div>
<div class="rv" style="left:182px;top:77.55px">−11963.44</div>
<div class="rv" style="left:360.8px;top:77.55px">−13817.64</div>
<div class="rv" style="left:539.6px;top:77.55px">−15170.395</div>
<div class="rk" style="left:2px;top:91.98px">载荷范围<span style="font-size:7.4px;font-family:'Liberation Mono',monospace;font-weight:700;letter-spacing:-0.3px;position:relative;top:-0.4px;color:#2c2c2c">[N]</span></div>
<div class="rv" style="left:182px;top:92.38px">23076.02</div>
<div class="rv" style="left:360.8px;top:92.38px">26880.31</div>
<div class="rv" style="left:539.6px;top:92.38px">29639.155</div>
<div class="abs" style="left:0;top:103.81px;width:716.7px;height:14.83px;background:#f1f1f1"></div>
<div class="rk" style="left:2px;top:106.81px">应变峰值<span style="font-size:7.4px;font-family:'Liberation Mono',monospace;font-weight:700;letter-spacing:-0.3px;position:relative;top:-0.4px;color:#2c2c2c">[%]</span></div>
<div class="rv" style="left:182px;top:107.21px">0.601</div>
<div class="rv" style="left:360.8px;top:107.21px">0.597</div>
<div class="rv" style="left:539.6px;top:107.21px">0.598</div>
<div class="rk" style="left:2px;top:121.64px">应变谷值<span style="font-size:7.4px;font-family:'Liberation Mono',monospace;font-weight:700;letter-spacing:-0.3px;position:relative;top:-0.4px;color:#2c2c2c">[%]</span></div>
<div class="rv" style="left:182px;top:122.04px">−0.6</div>
<div class="rv" style="left:360.8px;top:122.04px">−0.599</div>
<div class="rv" style="left:539.6px;top:122.04px">−0.6</div>
<div class="abs" style="left:0;top:133.47px;width:716.7px;height:14.83px;background:#f1f1f1"></div>
<div class="rk" style="left:2px;top:136.47px">应变范围<span style="font-size:7.4px;font-family:'Liberation Mono',monospace;font-weight:700;letter-spacing:-0.3px;position:relative;top:-0.4px;color:#2c2c2c">[%]</span></div>
<div class="rv" style="left:182px;top:136.87px">1.201</div>
<div class="rv" style="left:360.8px;top:136.87px">1.196</div>
<div class="rv" style="left:539.6px;top:136.87px">1.198</div>
<div class="rk" style="left:2px;top:151.30px">塑性应变峰值<span style="font-size:7.4px;font-family:'Liberation Mono',monospace;font-weight:700;letter-spacing:-0.3px;position:relative;top:-0.4px;color:#2c2c2c">[%]</span></div>
<div class="rv" style="left:182px;top:151.70px">0.30617</div>
<div class="rv" style="left:360.8px;top:151.70px">0.25046</div>
<div class="rv" style="left:539.6px;top:151.70px">0.21448</div>
<div class="abs" style="left:0;top:163.13px;width:716.7px;height:14.83px;background:#f1f1f1"></div>
<div class="rk" style="left:2px;top:166.13px">塑性应变谷值<span style="font-size:7.4px;font-family:'Liberation Mono',monospace;font-weight:700;letter-spacing:-0.3px;position:relative;top:-0.4px;color:#2c2c2c">[%]</span></div>
<div class="rv" style="left:182px;top:166.53px">−0.28236</div>
<div class="rv" style="left:360.8px;top:166.53px">−0.23236</div>
<div class="rv" style="left:539.6px;top:166.53px">−0.1976</div>
<div class="rk" style="left:2px;top:180.96px">塑性应变范围<span style="font-size:7.4px;font-family:'Liberation Mono',monospace;font-weight:700;letter-spacing:-0.3px;position:relative;top:-0.4px;color:#2c2c2c">[%]</span></div>
<div class="rv" style="left:182px;top:181.36px">0.58853</div>
<div class="rv" style="left:360.8px;top:181.36px">0.48282</div>
<div class="rv" style="left:539.6px;top:181.36px">0.41208</div>
</div>
<div class="cb" style="top:114.1px"><svg width="8" height="8" viewBox="0 0 8 8" style="position:absolute;left:-0.8px;top:-0.9px"><path d="M1.5 3.9 L3.2 5.7 L6.6 1.6" fill="none" stroke="#333" stroke-width="0.9"/></svg></div>
<div class="cbt" style="top:114.4px">测试结果概要</div>
<div class="cb" style="top:139.7px"><svg width="8" height="8" viewBox="0 0 8 8" style="position:absolute;left:-0.8px;top:-0.9px"><path d="M1.5 3.9 L3.2 5.7 L6.6 1.6" fill="none" stroke="#333" stroke-width="0.9"/></svg></div>
<div class="cbt" style="top:140.0px">所选周期曲线</div>
<div class="cb" style="top:189.1px"></div>
<div class="cbt" style="top:189.4px">趋势曲线</div>
<div class="cb" style="top:212.9px"></div>
<div class="cbt" style="top:213.2px">趋势数据</div>
<div class="cb" style="top:238.9px"><svg width="8" height="8" viewBox="0 0 8 8" style="position:absolute;left:-0.8px;top:-0.9px"><path d="M1.5 3.9 L3.2 5.7 L6.6 1.6" fill="none" stroke="#333" stroke-width="0.9"/></svg></div>
<div class="cbt" style="top:239.2px">内嵌图表</div>
<div class="abs" style="left:806.2px;top:261.6px;width:63.2px;height:19px;border:1px solid #b4b4b4;background:#e3e3e3"></div>
<div class="t" style="left:819.6px;top:267px;font-size:8.8px;color:#222">生成报告</div>
<div class="t" style="left:7.4px;top:525.5px;font-size:7.9px;color:#222">D:\szrg20200414\LCFwithTemperature650_,m_lcf</div>
<div class="abs" style="left:376.4px;top:525px;width:1px;height:9px;background:#d0d0d0"></div>
<svg class="abs" style="left:1045.6px;top:528.4px" width="7" height="6" viewBox="0 0 7 6"><rect x="5" y="0" width="1.2" height="1.2" fill="#a8a8a8"/><rect x="5" y="2.2" width="1.2" height="1.2" fill="#a8a8a8"/><rect x="5" y="4.4" width="1.2" height="1.2" fill="#a8a8a8"/><rect x="2.8" y="2.2" width="1.2" height="1.2" fill="#a8a8a8"/><rect x="2.8" y="4.4" width="1.2" height="1.2" fill="#a8a8a8"/><rect x="0.6" y="4.4" width="1.2" height="1.2" fill="#a8a8a8"/></svg>
</body></html>
